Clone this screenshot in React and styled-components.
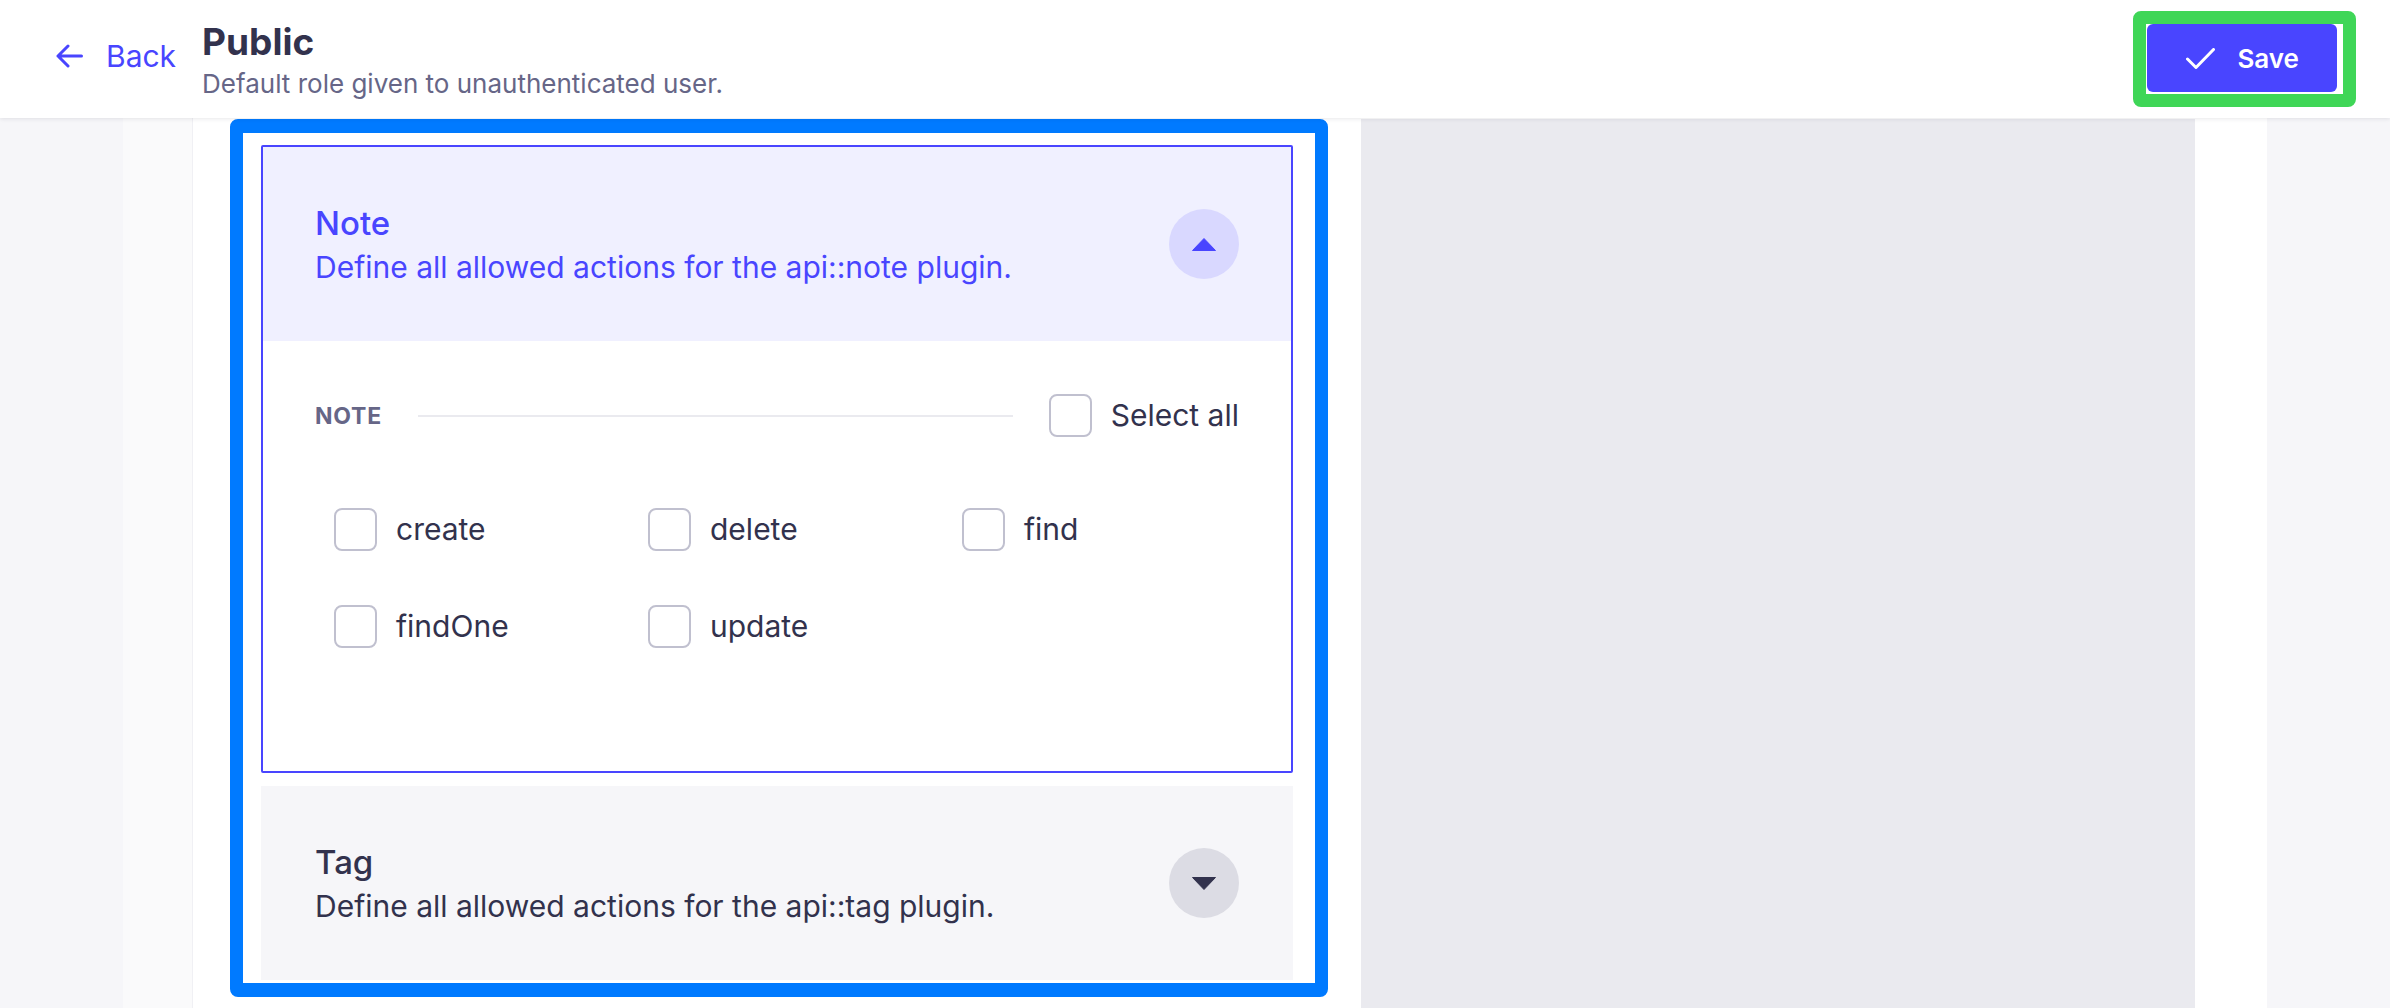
import React from 'react';
import styled, { createGlobalStyle } from 'styled-components';

const GlobalStyle = createGlobalStyle`
  * { box-sizing: border-box; }
  body {
    margin: 0;
    background: #f6f6f9;
    font-family: Inter, "Liberation Sans", sans-serif;
    color: #32324d;
  }
`;

const TopBar = styled.header`
  position: relative;
  z-index: 1;
  height: 118px;
  display: flex;
  align-items: center;
  padding: 0 34px 0 56px;
  background: #fff;
  box-shadow: 0 1px 4px rgba(33, 33, 52, 0.1);
`;

const BackLink = styled.a`
  display: flex;
  align-items: center;
  gap: 23px;
  margin: 0 26px 7px 0;
  color: #4945ff;
  font-size: 30px;
  line-height: 36px;
  text-decoration: none;
`;

const TitleBlock = styled.div`
  display: flex;
  flex-direction: column;
  flex: 1;
`;

const Title = styled.h1`
  margin: 0;
  font-size: 37px;
  line-height: 46px;
  font-weight: 700;
  color: #32324d;
`;

const Subtitle = styled.p`
  margin: 2px 0 0;
  font-size: 26px;
  line-height: 33px;
  color: #666687;
`;

const GreenMark = styled.div`
  display: flex;
  padding: 0 6px 2px 1px;
  border: 13px solid #3fd657;
  border-radius: 8px;
  background: #fff;
`;

const SaveButton = styled.button`
  height: 68px;
  display: flex;
  align-items: center;
  gap: 22px;
  padding: 0 38px 0 39px;
  border: none;
  border-radius: 6px;
  background: #4945ff;
  color: #fff;
  font-family: inherit;
  font-size: 26px;
  font-weight: 600;
`;

const Main = styled.main`
  display: flex;
  min-height: calc(100vh - 118px);
  padding: 0 123px;
`;

const Frame = styled.div`
  flex: 1;
  display: flex;
  background: #fff;
`;

const Gutter = styled.div`
  width: 70px;
  background: #fafafb;
  border-right: 1px solid #f0f0f4;
`;

const Columns = styled.div`
  display: grid;
  grid-template-columns: 1098px 834px;
  column-gap: 33px;
  padding-left: 37px;
`;

const BlueMark = styled.div`
  align-self: start;
  margin-top: 1px;
  border: 13px solid #007aff;
  border-width: 14px 13px;
  border-radius: 8px;
`;

const Card = styled.section`
  height: 850px;
  overflow: hidden;
  display: flex;
  flex-direction: column;
  gap: 13px;
  padding: 12px 22px 3px 18px;
  background: #fff;
`;

const SidePanel = styled.aside`
  margin-top: 1px;
  background: #eaeaef;
`;

const Accordion = styled.div`
  border: ${p => (p.$open ? '2px solid #4945ff' : 'none')};
  border-radius: 2px;
  background: ${p => (p.$open ? '#fff' : '#f6f6f9')};
`;

const AccordionHead = styled.div`
  height: 194px;
  flex-shrink: 0;
  display: flex;
  align-items: center;
  justify-content: space-between;
  padding: 0 ${p => (p.$open ? 52 : 54)}px;
  background: ${p => (p.$open ? '#f0f0ff' : '#f6f6f9')};
`;

const HeadText = styled.div`
  display: flex;
  flex-direction: column;
  gap: 6px;
`;

const AccTitle = styled.span`
  font-size: 33px;
  line-height: 40px;
  font-weight: 500;
  color: ${p => (p.$open ? '#4945ff' : '#32324d')};
`;

const AccDesc = styled.span`
  font-size: 30px;
  line-height: 36px;
  color: ${p => (p.$open ? '#4945ff' : '#32324d')};
`;

const Toggle = styled.span`
  width: 70px;
  height: 70px;
  border-radius: 50%;
  display: flex;
  align-items: center;
  justify-content: center;
  background: ${p => (p.$open ? '#d9d8ff' : '#dcdce4')};
`;

const AccBody = styled.div`
  padding: 53px 52px 123px;
`;

const SectionRow = styled.div`
  display: flex;
  align-items: center;
  height: 43px;
`;

const SectionLabel = styled.span`
  font-size: 23px;
  font-weight: 700;
  letter-spacing: 0.8px;
  color: #666687;
  text-transform: uppercase;
`;

const Rule = styled.div`
  flex: 1;
  height: 2px;
  margin: 0 36px;
  background: #eaeaef;
`;

const CheckLabel = styled.label`
  display: flex;
  align-items: center;
  gap: 19px;
  font-size: 30px;
  line-height: 43px;
  color: #32324d;
`;

const Box = styled.span`
  width: 43px;
  height: 43px;
  border: 2px solid #c0c0cf;
  border-radius: 8px;
  background: #fff;
`;

const ActionGrid = styled.div`
  display: grid;
  grid-template-columns: repeat(3, 314px);
  row-gap: 54px;
  margin-top: 71px;
  padding-left: 19px;
`;

const ArrowLeft = () => (
  <svg width="27" height="24" viewBox="0 0 27 24" fill="none" stroke="#4945ff" strokeWidth="3" strokeLinecap="round" strokeLinejoin="round">
    <path d="M25.5 12H2M12 2L2 12l10 10" />
  </svg>
);

const CheckIcon = () => (
  <svg width="29" height="21" viewBox="0 0 29 21" fill="none" stroke="#fff" strokeWidth="3" strokeLinecap="round" strokeLinejoin="round">
    <path d="M1.5 11l8.5 8.5L27.5 1.5" />
  </svg>
);

const Caret = ({ up, color }) => (
  <svg width="24" height="13" viewBox="0 0 24 13">
    <path d={up ? 'M12 0.5L23.5 12.5H0.5Z' : 'M12 12.5L23.5 0.5H0.5Z'} fill={color} stroke={color} strokeLinejoin="round" />
  </svg>
);

const Checkbox = ({ children }) => (
  <CheckLabel>
    <Box />
    {children}
  </CheckLabel>
);

const actions = ['create', 'delete', 'find', 'findOne', 'update'];

export default function App() {
  return (
    <>
      <GlobalStyle />
      <TopBar>
        <BackLink href="#">
          <ArrowLeft />
          Back
        </BackLink>
        <TitleBlock>
          <Title>Public</Title>
          <Subtitle>Default role given to unauthenticated user.</Subtitle>
        </TitleBlock>
        <GreenMark>
          <SaveButton>
            <CheckIcon />
            Save
          </SaveButton>
        </GreenMark>
      </TopBar>
      <Main>
        <Frame>
          <Gutter />
          <Columns>
            <BlueMark>
              <Card>
                <Accordion $open>
                  <AccordionHead $open>
                    <HeadText>
                      <AccTitle $open>Note</AccTitle>
                      <AccDesc $open>Define all allowed actions for the api::note plugin.</AccDesc>
                    </HeadText>
                    <Toggle $open>
                      <Caret up color="#4945ff" />
                    </Toggle>
                  </AccordionHead>
                  <AccBody>
                    <SectionRow>
                      <SectionLabel>Note</SectionLabel>
                      <Rule />
                      <Checkbox>Select all</Checkbox>
                    </SectionRow>
                    <ActionGrid>
                      {actions.map(a => (
                        <Checkbox key={a}>{a}</Checkbox>
                      ))}
                    </ActionGrid>
                  </AccBody>
                </Accordion>
                <Accordion>
                  <AccordionHead>
                    <HeadText>
                      <AccTitle>Tag</AccTitle>
                      <AccDesc>Define all allowed actions for the api::tag plugin.</AccDesc>
                    </HeadText>
                    <Toggle>
                      <Caret color="#32324d" />
                    </Toggle>
                  </AccordionHead>
                </Accordion>
              </Card>
            </BlueMark>
            <SidePanel />
          </Columns>
        </Frame>
      </Main>
    </>
  );
}
